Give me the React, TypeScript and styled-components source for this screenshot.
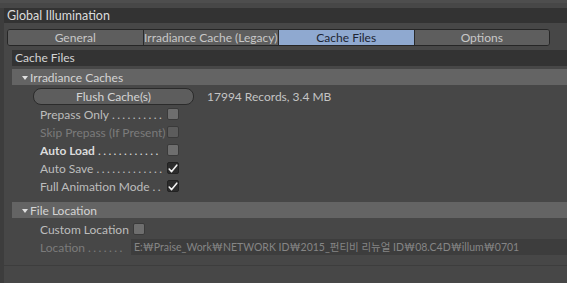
import React from "react";
import styled, { createGlobalStyle } from "styled-components";

const GlobalStyle = createGlobalStyle`
  html, body {
    margin: 0;
    padding: 0;
    background: #474747;
    overflow: hidden;
  }
  body {
    font-family: Lato, "Noto Sans", "Noto Sans CJK KR", sans-serif;
    font-size: 12px;
    color: #c4c4c4;
  }
`;

const Page = styled.div`
  width: 567px;
  height: 283px;
  display: flex;
  flex-direction: column;
  background: #474747;
  border-top: 3px solid #4e4e4e;
  box-sizing: border-box;
`;

const Frame = styled.div`
  flex: 1;
  display: flex;
  flex-direction: column;
  margin-top: 5px;
  border-left: 4px solid #3d3d3d;
`;

const TitleBar = styled.div`
  height: 15px;
  background: #333333;
  color: #dcdcdc;
  font-size: 12.5px;
  line-height: 15px;
  padding-left: 3px;
  white-space: nowrap;
`;

const Tabs = styled.div`
  display: flex;
  margin: 6px 17px 4px 3px;
  height: 15px;
  border: 1px solid #262626;
  border-radius: 3px;
  overflow: hidden;
  background: #5c5c5c;
`;

const Tab = styled.div<{ $active?: boolean }>`
  flex: 1;
  display: flex;
  align-items: center;
  justify-content: center;
  white-space: nowrap;
  font-size: 12px;
  color: ${(p) => (p.$active ? "#1d2533" : "#c8c8c8")};
  background: ${(p) => (p.$active ? "#8fa9d0" : "#5e5e5e")};
  & + & {
    border-left: 1px solid #2a2a2a;
  }
`;

const SectionBar = styled.div`
  margin-left: 8px;
  height: 16px;
  line-height: 16px;
  background: #333333;
  color: #d4d4d4;
  font-size: 12px;
  padding-left: 3px;
`;

const Body = styled.div`
  flex: 1;
  display: flex;
  flex-direction: column;
  padding-top: 3px;
  border-bottom: 1px solid #3d3d3d;
  margin-bottom: 17px;
`;

const GroupHeader = styled.div`
  margin-left: 8px;
  height: 16px;
  display: flex;
  align-items: center;
  background: #646464;
  color: #d4d4d4;
  font-size: 12px;
  padding-left: 10px;
  gap: 2px;
  white-space: nowrap;
`;

const Arrow = styled.span`
  width: 0;
  height: 0;
  border-left: 3.5px solid transparent;
  border-right: 3.5px solid transparent;
  border-top: 4px solid #e0e0e0;
  margin-top: 1px;
`;

const Group = styled.div<{ $last?: boolean }>`
  display: flex;
  flex-direction: column;
  padding: 2px 0 ${(p) => (p.$last ? 0 : 7)}px 36px;
`;

const ButtonRow = styled.div`
  display: flex;
  align-items: center;
  height: 18px;
  margin-left: -7px;
`;

const PillButton = styled.div`
  width: 159px;
  height: 15px;
  border: 1px solid #2b2b2b;
  border-radius: 8px;
  background: #5d5d5d;
  color: #d4d4d4;
  display: flex;
  align-items: center;
  justify-content: center;
  font-size: 12px;
  white-space: nowrap;
`;

const Info = styled.span`
  margin-left: 13px;
  color: #c4c4c4;
  font-size: 12px;
  white-space: nowrap;
`;

const Row = styled.div`
  display: flex;
  align-items: center;
  height: 18px;
`;

const Label = styled.span<{ $w?: number; $dim?: boolean; $bold?: boolean }>`
  flex: none;
  display: flex;
  ${(p) => (p.$w ? `width: ${p.$w}px;` : "margin-right: 4px;")}
  white-space: nowrap;
  font-size: 12px;
  color: ${(p) => (p.$dim ? "#7b7b7b" : p.$bold ? "#dcdcdc" : "#bdbdbd")};
  font-weight: ${(p) => (p.$bold ? 700 : 400)};
`;

const Dots = styled.span`
  margin-left: 3px;
  letter-spacing: 2.4px;
  font-weight: 400;
`;

const Check = styled.span<{ $on?: boolean; $dim?: boolean }>`
  flex: none;
  width: 10px;
  height: 10px;
  border-radius: 2px;
  border: 1px solid ${(p) => (p.$on ? "#222" : "#3a3a3a")};
  background: ${(p) => (p.$on ? "#2c2c2c" : p.$dim ? "#5c5c5c" : "#6e6e6e")};
  display: flex;
  align-items: center;
  justify-content: center;
`;

const PathField = styled.div`
  flex: 1;
  height: 16px;
  background: #3d3d3d;
  color: #858585;
  font-size: 10.5px;
  line-height: 16px;
  padding-left: 3px;
  white-space: nowrap;
  overflow: hidden;
`;

const Tick = () => (
  <svg width="10" height="9" viewBox="0 0 10 9">
    <path d="M1.2 5 L3.6 7.6 L8.8 1.2" fill="none" stroke="#f2f2f2" strokeWidth="1.6" strokeLinecap="round" strokeLinejoin="round" />
  </svg>
);

const dots = (n: number) => ".".repeat(n);

export default function App() {
  return (
    <>
      <GlobalStyle />
      <Page>
        <Frame>
          <TitleBar>Global Illumination</TitleBar>
          <Tabs>
            <Tab>General</Tab>
            <Tab>Irradiance Cache (Legacy)</Tab>
            <Tab $active>Cache Files</Tab>
            <Tab>Options</Tab>
          </Tabs>
          <SectionBar>Cache Files</SectionBar>
          <Body>
            <GroupHeader>
              <Arrow />
              Irradiance Caches
            </GroupHeader>
            <Group>
              <ButtonRow>
                <PillButton>Flush Cache(s)</PillButton>
                <Info>17994 Records, 3.4 MB</Info>
              </ButtonRow>
              <Row>
                <Label $w={127}>
                  Prepass Only<Dots>{dots(10)}</Dots>
                </Label>
                <Check />
              </Row>
              <Row>
                <Label $w={127} $dim>Skip Prepass (If Present)</Label>
                <Check $dim />
              </Row>
              <Row>
                <Label $w={127} $bold>
                  Auto Load<Dots>{dots(12)}</Dots>
                </Label>
                <Check />
              </Row>
              <Row>
                <Label $w={127}>
                  Auto Save<Dots>{dots(13)}</Dots>
                </Label>
                <Check $on>
                  <Tick />
                </Check>
              </Row>
              <Row>
                <Label $w={127}>
                  Full Animation Mode<Dots>{dots(2)}</Dots>
                </Label>
                <Check $on>
                  <Tick />
                </Check>
              </Row>
            </Group>
            <GroupHeader>
              <Arrow />
              File Location
            </GroupHeader>
            <Group $last>
              <Row>
                <Label>Custom Location</Label>
                <Check />
              </Row>
              <Row>
                <Label $w={91} $dim>
                  Location<Dots>{dots(7)}</Dots>
                </Label>
                <PathField>E:₩Praise_Work₩NETWORK ID₩2015_펀티비 리뉴얼 ID₩08.C4D₩illum₩0701</PathField>
              </Row>
            </Group>
          </Body>
        </Frame>
      </Page>
    </>
  );
}
